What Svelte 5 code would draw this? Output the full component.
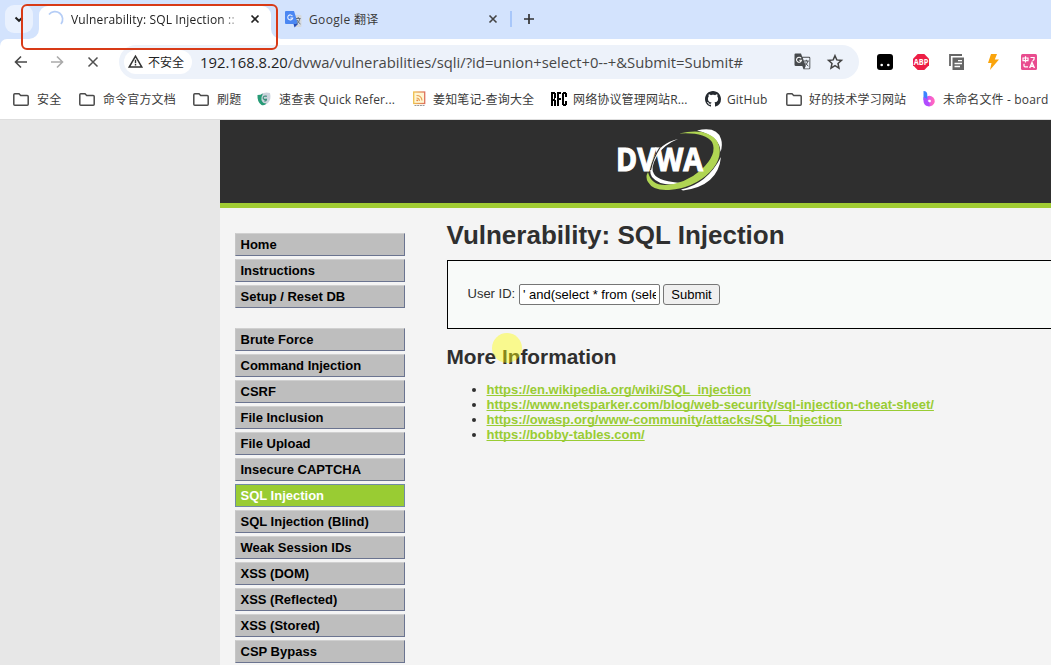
<script>
  const bookmarks = [
    { icon: 'folder', label: '安全', pad: 24 },
    { icon: 'folder', label: '命令官方文档', pad: 24 },
    { icon: 'folder', label: '刷题', pad: 24 },
    { icon: 'swirl', label: '速查表 Quick Refer...', pad: 22 },
    { icon: 'feed', label: '姜知笔记-查询大全', pad: 20 },
    { icon: 'rfc', label: '网络协议管理网站R...', pad: 22 },
    { icon: 'github', label: 'GitHub', pad: 22 },
    { icon: 'folder', label: '好的技术学习网站', pad: 23 },
    { icon: 'board', label: '未命名文件 - board', pad: 21 }
  ];
  const menu = [
    ['Home', 'Instructions', 'Setup / Reset DB'],
    ['Brute Force', 'Command Injection', 'CSRF', 'File Inclusion', 'File Upload', 'Insecure CAPTCHA', 'SQL Injection', 'SQL Injection (Blind)', 'Weak Session IDs', 'XSS (DOM)', 'XSS (Reflected)', 'XSS (Stored)', 'CSP Bypass']
  ];
  const links = [
    'https://en.wikipedia.org/wiki/SQL_injection',
    'https://www.netsparker.com/blog/web-security/sql-injection-cheat-sheet/',
    'https://owasp.org/www-community/attacks/SQL_Injection',
    'https://bobby-tables.com/'
  ];
</script>

<div class="screen">
  <div class="tabs">
    <div class="drop"><svg width="28" height="28" viewBox="0 0 28 28"><path d="M10.5 12.5l3.5 3.300 3.500-3.300" fill="none" stroke="#222" stroke-width="2"/></svg></div>
    <div class="tab">
      <svg class="foot left" width="10" height="10"><path d="M10 0v10H0A10 10 0 0 0 10 0z" fill="#fff"/></svg>
      <svg width="18" height="18" viewBox="0 0 18 18"><path d="M2 4.500A7.200 7.200 0 0 1 14 14" fill="none" stroke="#b5cdf6" stroke-width="1.700"/></svg>
      <span class="title">Vulnerability: SQL Injection ::</span>
      <svg class="x" width="10" height="10" viewBox="0 0 10 10"><path d="M1.500 1.500l7 7M8.500 1.500l-7 7" stroke="#222" stroke-width="1.700"/></svg>
      <svg class="foot right" width="10" height="10"><path d="M0 0v10h10A10 10 0 0 1 0 0z" fill="#fff"/></svg>
    </div>
    <div class="tab2">
      <svg width="17" height="17" viewBox="0 0 17 17"><path d="M7 4h8.500q1 0 1 1v10q0 1-1 1H10z" fill="#d6d9dd"/><path d="M1 0h8l4 13H1q-1 0-1-1V1q0-1 1-1z" fill="#4b87f2"/><path d="M8.500 13H13l-3.500 3.500z" fill="#2950b8"/><path d="M7.400 5.100A2.500 2.500 0 1 0 7.700 7H5.300" fill="none" stroke="#e8f0ff" stroke-width="1.100"/><path d="M11 7.500h4.500M13.200 6v1.500M15 7.500q-1 4-3.500 5.500M12 9q1.500 3 3.500 4" fill="none" stroke="#68727d"/></svg>
      <span>Google 翻译</span>
      <svg class="x" width="10" height="10" viewBox="0 0 10 10"><path d="M1.500 1.500l7 7M8.500 1.500l-7 7" stroke="#444" stroke-width="1.600"/></svg>
    </div>
    <i class="sep"></i>
    <svg class="plus" width="12" height="12" viewBox="0 0 12 12"><path d="M6 1v10M1 6h10" stroke="#333" stroke-width="1.700"/></svg>
  </div>

  <div class="bar">
    <svg width="14" height="14" viewBox="0 0 14 14"><path d="M13 7H1.800M7 1.500L1.500 7 7 12.500" fill="none" stroke="#484848" stroke-width="1.600"/></svg>
    <svg width="14" height="14" viewBox="0 0 14 14"><path d="M1 7h11.200M7 1.500L12.500 7 7 12.500" fill="none" stroke="#aaa" stroke-width="1.600"/></svg>
    <svg width="14" height="14" viewBox="0 0 14 14"><path d="M2.500 2.500l9 9M11.500 2.500l-9 9" stroke="#505050" stroke-width="1.500"/></svg>
    <div class="omni">
      <div class="chip">
        <svg width="15" height="13" viewBox="0 0 15 13"><path d="M7.500 1.200L1.200 12h12.600z" fill="none" stroke="#333" stroke-width="1.500"/><path d="M7.500 4.800v3.400M7.500 9v1.400" stroke="#333" stroke-width="1.400"/></svg>
        <span>不安全</span>
      </div>
      <span class="url"><b>192.168.8.20</b>/dvwa/vulnerabilities/sqli/?id=union+select+0--+&amp;Submit=Submit#</span>
      <svg class="tr" width="17" height="17" viewBox="0 0 17 17"><path d="M1.500.5H7l1.200 3.200H15q1.300 0 1.300 1.300v10q0 1.300-1.300 1.300H9.500L8.300 13H1.800Q.5 13 .5 11.700V1.500q0-1 1-1z" fill="#474a4d"/><path d="M8.700 4.700H15q.4 0 .4.400v9.800q0 .5-.4.500h-4.500l1.300-2.400z" fill="#edf2fa"/><path d="M7.100 5.300A2.500 2.500 0 1 0 7.500 7.200H5.200" fill="none" stroke="#fff" stroke-width="1.100"/><path d="M9.800 8h5M12.300 6.800V8M14 8q-1 3-3 4.500M11.300 9.500q1 2.200 3 3.500" fill="none" stroke="#474a4d"/></svg>
      <svg width="16" height="16" viewBox="0 0 16 16"><path d="M8 1.700l1.800 4.200 4.700.5-3.500 3.100 1 4.600-4-2.400-4 2.400 1-4.600-3.500-3.100 4.700-.5z" fill="none" stroke="#444" stroke-width="1.500"/></svg>
    </div>
    <div class="ext">
      <svg width="16" height="16" viewBox="0 0 16 16"><rect width="16" height="16" rx="3"/><circle cx="4.700" cy="11" r="1.300" fill="#fff"/><circle cx="11.300" cy="11" r="1.300" fill="#fff"/></svg>
      <svg width="16" height="16" viewBox="0 0 16 16"><path d="M4.700 0h6.600L16 4.700v6.600L11.300 16H4.700L0 11.300V4.700z" fill="#ed1e45"/><text x="8" y="11" text-anchor="middle" textLength="14.500" lengthAdjust="spacingAndGlyphs" font-family="Open Sans, sans-serif" font-weight="700" font-size="8.500" fill="#fff">ABP</text></svg>
      <svg width="16" height="16" viewBox="0 0 16 16"><path d="M1 12V1h12" fill="none" stroke="#666" stroke-width="1.800"/><path d="M3.500 3.500H15V16H3.500z" fill="#666"/><path d="M9 6.700h4M5.500 9.500H13M5.500 12.500H11" stroke="#fff" stroke-width="1.300"/></svg>
      <svg width="16" height="16" viewBox="0 0 16 16"><path d="M6 0h6L9.800 5.500H14L5 16l1.500-7H3z" fill="#faa40b"/></svg>
      <svg width="16" height="16" viewBox="0 0 16 16"><rect width="16" height="16" rx="1.500" fill="#e94c8f"/><path d="M2 4h5v2.700H2zM4.500 2.300V8.500M9.500 3.500h3.700Q13.500 6 11.500 7M3 9.800v2q0 1 1 1h3" fill="none" stroke="#fff" stroke-width="1.200"/><path d="M8.700 14L11 8.500l2.400 5.500M9.600 12.200h3" fill="none" stroke="#fff" stroke-width="1.400"/></svg>
    </div>
  </div>

  <div class="marks">
    {#each bookmarks as b}
      <div class="mark">
        <span class="ico" style:width="{b.pad}px">
          {#if b.icon === 'folder'}
            <svg width="16" height="13" viewBox="0 0 16 13"><path d="M.8 11.200V1.800q0-1 1-1H6l1.700 1.700h6.500q1 0 1 1v7.700q0 1-1 1H1.800q-1 0-1-1z" fill="none" stroke="#4a4a4a" stroke-width="1.500"/></svg>
          {:else if b.icon === 'swirl'}
            <svg width="15" height="14" viewBox="0 0 15 14"><path d="M4 2Q8-.5 13 1q1.500 6-2 10-3 2.500-6 2z" fill="#ccd3dc"/><path d="M.5 3Q3.500 3 6 1.500 4 5 4.500 8q1 3.500 5 3.500-2 2.500-5 1.500Q0 10 .5 3z" fill="#279b76"/><path d="M10 4.300Q6.500 3.500 6.200 5.700T9.500 7.200q.3 1.800-2.300 1.800" fill="none" stroke="#398c77" stroke-width="1.100"/></svg>
          {:else if b.icon === 'feed'}
            <svg width="13" height="16" viewBox="0 0 13 16"><defs><linearGradient id="fd"><stop stop-color="#eec04e"/><stop offset="1" stop-color="#dd705c"/></linearGradient></defs><rect x=".7" y="1" width="11" height="11.500" fill="#fff6d2" stroke="url(#fd)" stroke-width="1.300"/><path d="M3.500 4.500q5 0 5.500 5M3.500 7q2.500 0 3 2.800" fill="none" stroke="#e8a055" stroke-width="1.200"/><circle cx="4.200" cy="9.300" r=".9" fill="#e58542"/><path d="M1.500 14.500h10" stroke="#999" stroke-dasharray="2 .7"/></svg>
          {:else if b.icon === 'rfc'}
            <svg width="16" height="14" viewBox="0 0 16 14" shape-rendering="crispEdges"><path d="M0 0h4v1h1v5H4v2h1v6H3V9H2v5H0zM2 2v5h1V2zM6 0h4v2H8v4h2v2H8v6H6zM12 0h3v1h1v4h-2V2h-1v10h1V9h2v4h-1v1h-3v-1h-1V1h1z" fill="#000"/></svg>
          {:else if b.icon === 'github'}
            <svg width="16" height="16" viewBox="0 0 16 16"><path fill="#24292f" d="M8 0C3.580 0 0 3.580 0 8c0 3.540 2.290 6.530 5.470 7.590.4.070.55-.17.55-.38 0-.19-.01-.82-.01-1.490-2.010.37-2.530-.49-2.690-.94-.09-.23-.48-.94-.82-1.130-.28-.15-.68-.52-.01-.53.63-.01 1.080.58 1.230.82.72 1.210 1.870.87 2.330.66.07-.52.28-.87.51-1.070-1.780-.2-3.640-.89-3.640-3.950 0-.87.31-1.590.82-2.150-.08-.2-.36-1.020.08-2.120 0 0 .67-.21 2.200.82.64-.18 1.320-.27 2-.27s1.360.09 2 .27c1.530-1.040 2.200-.82 2.200-.82.44 1.100.16 1.920.08 2.120.51.56.82 1.270.82 2.150 0 3.070-1.870 3.750-3.650 3.950.29.25.54.73.54 1.480 0 1.070-.01 1.930-.01 2.200 0 .21.15.46.55.38A8.010 8.010 0 0 0 16 8c0-4.420-3.580-8-8-8z"/></svg>
          {:else}
            <svg width="14" height="16" viewBox="0 0 14 16"><defs><linearGradient id="bd" x1="0" y1="0" x2="1" y2="0"><stop stop-color="#c94cff"/><stop offset="1" stop-color="#ff66c0"/></linearGradient></defs><path d="M4.300 9.500a3.300 3.300 0 1 1 1 3" fill="none" stroke="url(#bd)" stroke-width="3.800"/><path d="M1.500 0q3.800 0 3.800 4v7L1.500 9z" fill="#3c83ff"/><path d="M1.500 6v4q0 5 6 5.500v-4Q5.300 11 5.300 8z" fill="#b04cff"/></svg>
          {/if}
        </span>
        <span>{b.label}</span>
      </div>
    {/each}
  </div>

  <div class="page">
    <div class="site">
      <header>
        <svg width="110" height="66" viewBox="0 0 110 66">
          <path d="M61 11Q46 17 40 28 33 40 37 46 42 54 67 55 44 60 35 49 31 43 36 31 43 15 61 11z" fill="#fff"/>
          <path d="M80 2.500Q100-2 104 11 106 17 103.500 24 103 8 80 2.500z" fill="#fff"/>
          <path d="M62 5.500Q90-1 100 13 108 28 93 44 77 60 52 62 36 63 31 54 28 49 31 44 34 57 48 57 68 56 84 42 101 26 95 14 88 4 62 5.500z" fill="#b0d553"/>
          <path d="M104 29Q101 58 66 62.500L64 61.500Q90 56 104 29z" fill="#fff"/>
          <text x="-1" y="42.700" textLength="87" lengthAdjust="spacingAndGlyphs" font-family="Open Sans, sans-serif" font-weight="700" font-size="32" fill="#fff" stroke="#fff" stroke-width="1.100">DVWA</text>
          <path d="M33.500 42Q36 30 43 19.500" fill="none" stroke="#2f2f2f" stroke-width="1.200"/>
        </svg>
      </header>
      <div class="cols">
        <nav>
          {#each menu as group}
            <ul>
              {#each group as item}
                <li class:on={item === 'SQL Injection'}>{item}</li>
              {/each}
            </ul>
          {/each}
        </nav>
        <main>
          <h1>Vulnerability: SQL Injection</h1>
          <div class="box">
            <span class="lbl">User ID:</span>
            <div class="field"><span>' and(select * from (select</span></div>
            <button>Submit</button>
          </div>
          <h2>More Information</h2>
          <ul class="links">
            {#each links as l}<li><span>{l}</span></li>{/each}
          </ul>
        </main>
      </div>
    </div>
  </div>
  <div class="spot"></div>
  <div class="frame"></div>
</div>

<style>
  :global(body) { margin: 0; overflow: hidden; }
  svg { display: block; flex: none; overflow: visible; }
  .screen { position: relative; width: 1051px; height: 665px; overflow: hidden; display: flex; flex-direction: column; background: #d3e3fd; font-family: 'Open Sans', 'Noto Sans CJK SC', sans-serif; font-size: 12px; color: #3a3a3a; white-space: nowrap; }
  .tabs { height: 39px; flex: none; display: flex; align-items: flex-start; }
  .drop { width: 28px; height: 28px; margin: 5px 6px 0 5px; border-radius: 9px; background: #e9f1fe; }
  .tab { position: relative; box-sizing: border-box; width: 232px; height: 33px; margin-top: 6px; padding: 0 11px 7px 8px; border-radius: 9px 9px 0 0; background: #fff; display: flex; align-items: center; }
  .foot { position: absolute; bottom: 0; }
  .foot.left { left: -10px; }
  .foot.right { right: -10px; }
  .title { width: 166px; margin-left: 6px; overflow: hidden; color: #222; letter-spacing: .15px; mask-image: linear-gradient(90deg, #000 150px, transparent 172px); }
  .x { margin-left: auto; }
  .tab2 { width: 213px; height: 38px; margin-left: 14px; display: flex; align-items: center; }
  .tab2 span { margin-left: 7px; letter-spacing: .35px; }
  .sep { width: 2px; height: 16px; margin: 11px 0 0 12px; background: #a8c7fa; }
  .plus { margin: 13px 0 0 11px; }
  .bar { height: 45px; flex: none; background: #fff; border-radius: 7px 0 0; display: flex; align-items: center; padding-left: 14px; gap: 22px; }
  .omni { box-sizing: border-box; width: 740px; height: 34px; margin-left: -3px; border-radius: 17px; background: #edf2fa; display: flex; align-items: center; padding: 0 16px 0 5px; }
  .chip { width: 68px; height: 24px; box-sizing: border-box; padding-left: 4px; border-radius: 12px; background: #fff; display: flex; align-items: center; gap: 5px; color: #222; }
  .url { margin-left: 8px; font-size: 14.8px; color: #474747; }
  .url b { font-weight: 400; color: #1f1f1f; }
  .tr { margin-left: auto; margin-right: 16px; }
  .ext { display: flex; gap: 20px; margin-left: -4px; }
  .marks { height: 36px; padding: 1px 0 6px 13px; flex: none; box-sizing: border-box; background: #fff; border-bottom: 1px solid #dedede; display: grid; grid-template-columns: 66px 114px 64px 156px 138px 154px 81px 136px 130px; align-items: center; letter-spacing: .15px; }
  .mark { display: flex; align-items: center; height: 18px; }
  .ico { flex: none; }
  .page { flex: 1; background: #e7e7e7; padding-left: 220px; }
  .site { width: 1000px; height: 100%; background: #f4f4f4; font-family: 'Liberation Sans', Arial, sans-serif; color: #2f2f2f; }
  header { height: 75px; background: #2f2f2f; border-bottom: 5px solid #a1cc33; padding: 8px 0 0 397px; }
  .cols { display: flex; }
  nav { width: 170px; padding: 25px 0 0 15px; }
  ul { list-style: none; margin: 0; padding: 0; }
  nav ul { display: flex; flex-direction: column; gap: 3px; margin-bottom: 20px; }
  nav li { box-sizing: border-box; width: 170px; height: 23px; border: 1px solid #6b7490; border-top-color: #d0d0d0; border-left-color: #c6c6c6; background: #bebebe; color: #000; font: bold 13px/21px 'Liberation Sans', Arial, sans-serif; padding-left: 4.500px; }
  nav li.on { background: #9c3; border-color: #718aa5; color: #fff; }
  main { margin-left: 42px; width: 700px; }
  h1 { margin: 10px 0 0 -.5px; font-size: 26px; line-height: 34px; height: 42px; }
  .box { box-sizing: border-box; height: 69px; border: 1px solid #000; background: #f8faf9; display: flex; align-items: center; padding-left: 19.500px; font-size: 13px; }
  .lbl { width: 51.500px; margin-top: -2px; }
  .field { box-sizing: border-box; width: 141px; height: 21px; border: 1px solid #767676; border-radius: 2px; background: #fff; padding: 0 3px; color: #000; line-height: 19px; }
  .field span { display: block; overflow: hidden; }
  button { box-sizing: border-box; width: 57px; height: 21px; margin-left: 3px; padding: 0; border: 1px solid #767676; border-radius: 3px; background: #efefef; color: #000; font: 13px/19px 'Liberation Sans', Arial, sans-serif; }
  h2 { margin: 16px 0 13px -.5px; font-size: 20.800px; line-height: 24px; }
  .links { list-style: disc; padding-left: 39.500px; font-size: 13px; line-height: 15px; }
  .links span { color: #9c3; font-weight: bold; text-decoration: underline; text-decoration-skip-ink: none; }
  .spot { position: absolute; left: 492px; top: 333px; width: 30px; height: 30px; border-radius: 50%; background: rgba(255, 255, 0, .42); }
  .frame { position: absolute; left: 21px; top: 4px; width: 253px; height: 42px; border: 2px solid #d83a17; border-radius: 6px; }
</style>
